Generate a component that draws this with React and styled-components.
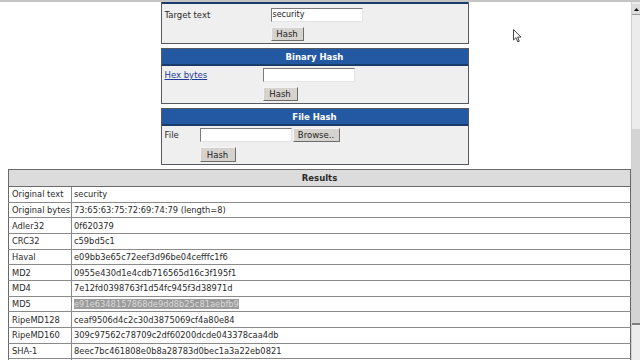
import React from 'react';
import styled, { createGlobalStyle } from 'styled-components';

const GlobalStyle = createGlobalStyle`
  html, body {
    margin: 0;
    padding: 0;
    background: #ffffff;
  }
  body {
    font-family: "DejaVu Sans", Verdana, sans-serif;
    font-size: 8px;
    color: #2a2a2a;
    overflow: hidden;
  }
`;

const Screen = styled.div`
  width: 640px;
  height: 360px;
  display: flex;
  flex-direction: column;
  overflow: hidden;
  position: relative;
`;

const TopEdge = styled.div`
  height: 2px;
  background: #c4c4c4;
  flex: none;
`;

const Body = styled.div`
  flex: 1;
  display: flex;
  min-height: 0;
`;

const Page = styled.div`
  flex: 1;
  padding-left: 8px;
  overflow: hidden;
  display: flex;
  flex-direction: column;
  gap: 4px;
`;

const PanelStack = styled.div`
  display: flex;
  flex-direction: column;
  align-items: center;
  gap: 4px;
  padding-right: 10px;
  margin-top: -16px;
`;

const Panel = styled.div`
  width: 306px;
  border: 1px solid #555a60;
  background: #efefef;
`;

const PanelHeader = styled.div`
  height: 15px;
  background: #2359a3;
  border-bottom: 2px solid #1b3c6a;
  color: #ffffff;
  font-weight: bold;
  font-size: 8.5px;
  display: flex;
  align-items: center;
  justify-content: center;
`;

const PanelBody = styled.div`
  display: grid;
  grid-template-columns: ${(p) => p.$labelWidth}px auto;
  row-gap: 5px;
  padding: ${(p) => p.$padTop}px 2px 2px;
  align-items: center;
  justify-items: start;
`;

const Label = styled.span`
  padding-left: 1px;
  font-size: 8.5px;
`;

const LinkLabel = styled.a`
  padding-left: 1px;
  font-size: 8.5px;
  color: #1c3c98;
  text-decoration: underline;
`;

const Field = styled.div`
  display: flex;
  align-items: center;
  gap: 1px;
`;

const TextInput = styled.div`
  width: 89px;
  height: 12px;
  background: #ffffff;
  border-top: 1px solid #7a7a7a;
  border-left: 1px solid #7a7a7a;
  border-bottom: 1px solid #e4e4e4;
  border-right: 1px solid #e4e4e4;
  font-size: 8px;
  line-height: 12px;
  padding-left: 1px;
  color: #222;
`;

const Button = styled.div`
  width: ${(p) => p.$width}px;
  height: ${(p) => p.$height || 12}px;
  background: #d6d3ce;
  border-top: 1px solid #f4f4f4;
  border-left: 1px solid #f4f4f4;
  border-bottom: 1px solid #6c6c6c;
  border-right: 1px solid #6c6c6c;
  display: flex;
  align-items: center;
  justify-content: center;
  font-size: 8.5px;
  color: #222;
`;

const Results = styled.table`
  width: 623px;
  border-collapse: collapse;
  border: 1px solid #6a6a6a;
  font-size: 8.3px;
  flex: none;
`;

const HeadCell = styled.th`
  height: 16px;
  background: #dcdcdc;
  font-weight: bold;
  font-size: 8.5px;
  text-align: center;
  padding: 0;
  border-bottom: 1px solid #6a6a6a;
`;

const KeyCell = styled.td`
  width: 59px;
  height: 14.67px;
  padding: 0 0 0 3px;
  border: 1px solid #8a8a8a;
  border-left: none;
  white-space: nowrap;
`;

const ValueCell = styled.td`
  height: 14.67px;
  padding: 0 0 0 2px;
  border-bottom: 1px solid #8a8a8a;
  border-top: 1px solid #8a8a8a;
  white-space: nowrap;
`;

const Selected = styled.span`
  background: #9c9c9c;
  color: #dadada;
`;

const Scrollbar = styled.div`
  width: 8px;
  flex: none;
  background: #ececec;
  border-left: 1px solid #d0d0d0;
  display: flex;
  flex-direction: column;
`;

const ArrowButton = styled.div`
  height: 10px;
  margin-top: 2px;
  background: #dcdcdc;
  border-bottom: 1px solid #9a9a9a;
  display: flex;
  align-items: center;
  justify-content: center;
`;

const Track = styled.div`
  height: 114px;
`;

const Thumb = styled.div`
  height: 194px;
  background: #d4d4d4;
  border-bottom: 2px solid #7c7c7c;
`;

const Cursor = styled.svg`
  position: absolute;
  left: 513px;
  top: 29px;
`;

const rows = [
  ['Original text', 'security'],
  ['Original bytes', '73:65:63:75:72:69:74:79 (length=8)'],
  ['Adler32', '0f620379'],
  ['CRC32', 'c59bd5c1'],
  ['Haval', 'e09bb3e65c72eef3d96be04cefffc1f6'],
  ['MD2', '0955e430d1e4cdb716565d16c3f195f1'],
  ['MD4', '7e12fd0398763f1d54fc945f3d38971d'],
  ['MD5', 'e91e6348157868de9dd8b25c81aebfb9', true],
  ['RipeMD128', 'ceaf9506d4c2c30d3875069cf4a80e84'],
  ['RipeMD160', '309c97562c78709c2df60200dcde043378caa4db'],
  ['SHA-1', '8eec7bc461808e0b8a28783d0bec1a3a22eb0821'],
  ['', ''],
];

const App = () => {
  return (
    <Screen>
      <GlobalStyle />
      <TopEdge />
      <Body>
        <Page>
          <PanelStack>
            <Panel>
              <PanelHeader />
              <PanelBody $labelWidth={107} $padTop={4}>
                <Label>Target text</Label>
                <TextInput>security</TextInput>
                <span />
                <Button $width={31}>Hash</Button>
              </PanelBody>
            </Panel>
            <Panel>
              <PanelHeader>Binary Hash</PanelHeader>
              <PanelBody $labelWidth={99} $padTop={2}>
                <LinkLabel href="#">Hex bytes</LinkLabel>
                <TextInput />
                <span />
                <Button $width={33}>Hash</Button>
              </PanelBody>
            </Panel>
            <Panel>
              <PanelHeader>File Hash</PanelHeader>
              <PanelBody $labelWidth={36} $padTop={2}>
                <Label>File</Label>
                <Field>
                  <TextInput />
                  <Button $width={45}>Browse..</Button>
                </Field>
                <span />
                <Button $width={34} $height={13}>Hash</Button>
              </PanelBody>
            </Panel>
          </PanelStack>
          <Results>
            <thead>
              <tr>
                <HeadCell colSpan={2}>Results</HeadCell>
              </tr>
            </thead>
            <tbody>
              {rows.map(([key, value, selected], i) => (
                <tr key={i}>
                  <KeyCell>{key}</KeyCell>
                  <ValueCell>{selected ? <Selected>{value}</Selected> : value}</ValueCell>
                </tr>
              ))}
            </tbody>
          </Results>
        </Page>
        <Scrollbar>
          <ArrowButton>
            <svg width="5" height="3" viewBox="0 0 5 3">
              <path d="M0 3 L2.5 0 L5 3 Z" fill="#111" />
            </svg>
          </ArrowButton>
          <Track />
          <Thumb />
        </Scrollbar>
      </Body>
      <Cursor width="9" height="14" viewBox="0 0 9 14">
        <path d="M0.5 0.5 L0.5 11 L3 8.6 L4.8 12.8 L6.3 12.2 L4.6 8.1 L8 8.1 Z" fill="#fff" stroke="#333" strokeWidth="0.9" />
      </Cursor>
    </Screen>
  );
};

export default App;
